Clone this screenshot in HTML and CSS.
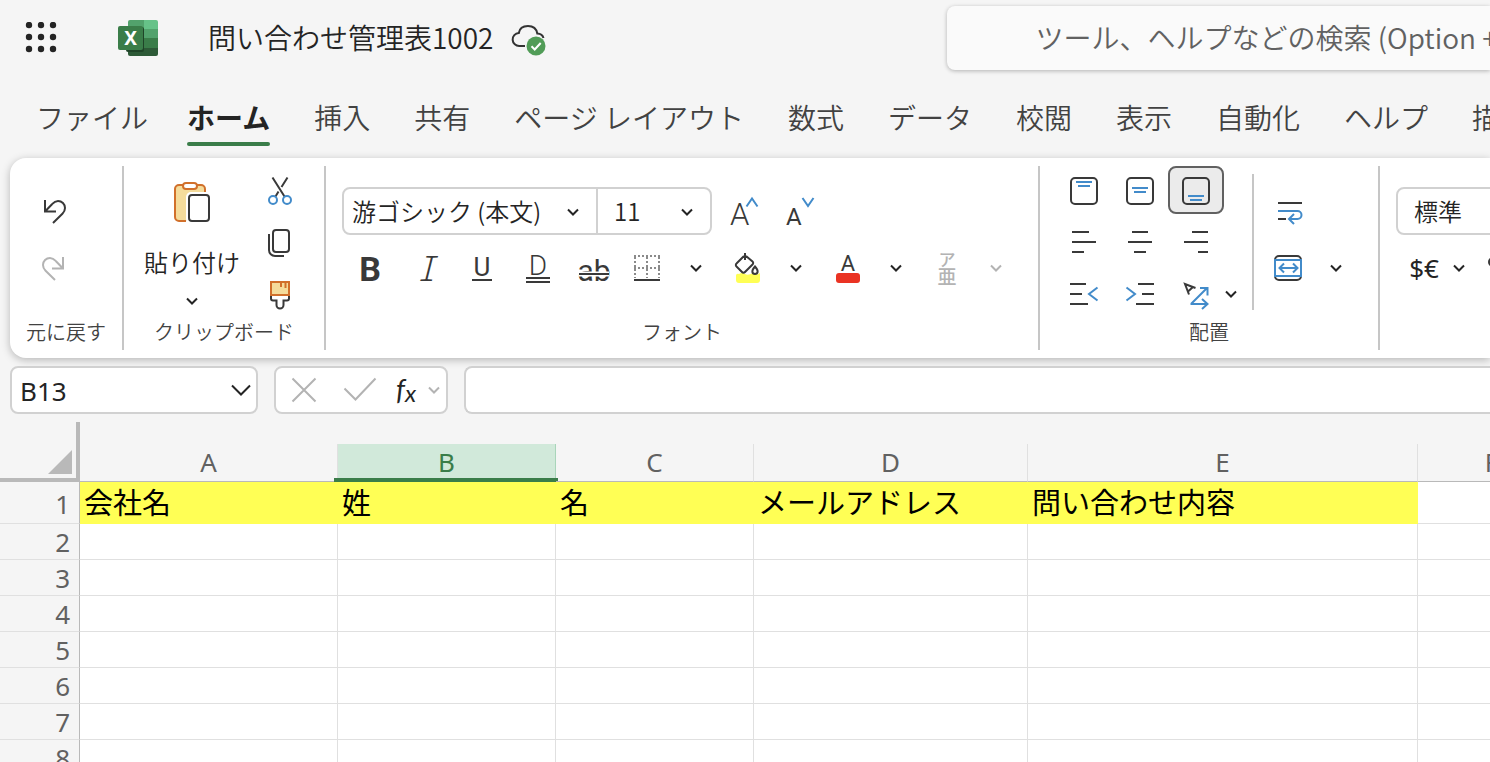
FILE: index.html
```html
<!DOCTYPE html>
<html lang="ja">
  <head>
    <meta charset="UTF-8" />
    <meta name="viewport" content="width=device-width, initial-scale=1.0" />
    <title>問い合わせ管理表1002</title>
    <link rel="stylesheet" href="styles.css">
  </head>
  <body>
    <svg class="defs" aria-hidden="true">
      <symbol id="chevron" viewBox="0 0 14 14">
        <path d="M2 4.500l5 5 5-5" fill="none" stroke="currentColor" stroke-width="2" />
      </symbol>
    </svg>

    <!-- タイトルバー -->
    <header class="titlebar">
      <button class="apps" aria-label="アプリ起動ツール">
        <svg width="32" height="32" viewBox="0 0 32 32" fill="#242424">
          <circle cx="4" cy="3" r="3.2" /><circle cx="16" cy="3" r="3.2" /><circle cx="28" cy="3" r="3.2" />
          <circle cx="4" cy="15" r="3.2" /><circle cx="16" cy="15" r="3.2" /><circle cx="28" cy="15" r="3.2" />
          <circle cx="4" cy="27" r="3.2" /><circle cx="16" cy="27" r="3.2" /><circle cx="28" cy="27" r="3.2" />
        </svg>
      </button>
      <svg class="logo" width="40" height="36" viewBox="0 0 40 36">
        <path d="M12 0h14v9H10V2a2 2 0 0 1 2-2z" fill="#52a26c" />
        <path d="M26 0h12a2 2 0 0 1 2 2v7H26z" fill="#66c288" />
        <path d="M10 9h16v9H10z" fill="#3a7d49" />
        <path d="M26 9h14v9H26z" fill="#52a26c" />
        <path d="M10 18h16v10H10z" fill="#2d5a37" />
        <path d="M26 18h14v10H26z" fill="#3a7d49" />
        <path d="M10 28h30v6a2 2 0 0 1-2 2H12a2 2 0 0 1-2-2z" fill="#2d5a37" />
        <rect x="8" y="7" width="18" height="25" rx="2" fill="#1f4428" />
        <rect x="0" y="6" width="25" height="24" rx="2" fill="#3a7d49" />
        <text class="logo-x" x="12.500" y="25" text-anchor="middle">X</text>
      </svg>
      <h1>問い合わせ管理表1002</h1>
      <svg class="cloud" width="36" height="32" viewBox="0 0 36 32">
        <path d="M14 22H8.500a6.500 6.500 0 0 1-.7-13C8.500 4.500 12 2 17 2s8.500 3 9.300 7.500c3 .2 5.500 2 6.200 4.500" fill="none" stroke="#333" stroke-width="2" />
        <circle cx="25" cy="22" r="9.500" fill="#519c57" />
        <path d="M20.500 22.300l3.200 3.200 6-6.500" fill="none" stroke="#fff" stroke-width="2" />
      </svg>
      <input class="search" type="text" aria-label="検索" placeholder="ツール、ヘルプなどの検索 (Option + Q)" />
    </header>

    <nav class="tabs">
      <a class="file" href="#">ファイル</a>
      <a class="current" href="#">ホーム</a>
      <a href="#">挿入</a>
      <a href="#">共有</a>
      <a href="#">ページ レイアウト</a>
      <a href="#">数式</a>
      <a href="#">データ</a>
      <a href="#">校閲</a>
      <a href="#">表示</a>
      <a href="#">自動化</a>
      <a href="#">ヘルプ</a>
      <a href="#">描画</a>
    </nav>

    <!-- リボン -->
    <div class="ribbon">
      <section class="group undo">
        <div class="tools stack">
          <button class="tool tall" aria-label="元に戻す">
            <svg class="icon" viewBox="0 0 40 40"><path d="M11 8v11.500H22M11.500 19l6.500-6.800C20 10 21.500 9 24 9a7 7 0 0 1 7 7c0 2.500-1 4.200-2.600 5.800L19 31" /></svg>
          </button>
          <button class="tool tall" aria-label="やり直し" disabled>
            <svg class="icon" viewBox="0 0 40 40"><path d="M29 9v11.500H18M28.500 20l-6.500-6.800C20 11 18.500 10 16 10a7 7 0 0 0-7 7c0 2.500 1 4.200 2.600 5.800L21 32" /></svg>
          </button>
        </div>
        <h2>元に戻す</h2>
      </section>

      <section class="group clipboard">
        <div class="tools">
          <button class="paste">
            <svg width="40" height="44" viewBox="0 0 40 44" fill="none" stroke-width="2">
              <rect x="3" y="5" width="30" height="36" rx="4" fill="#f5dc9b" />
              <rect x="14" y="12" width="26" height="32" rx="5" fill="#fff" />
              <path d="M14 41H7a4 4 0 0 1-4-4V9a4 4 0 0 1 4-4h22a4 4 0 0 1 4 4v3" stroke="#d1702b" />
              <rect x="11" y="3" width="14" height="6" rx="3" fill="#fff" stroke="#d1702b" />
              <rect x="17" y="15" width="20" height="26" rx="3" fill="#fff" stroke="#393939" />
            </svg>
            <span>貼り付け</span>
            <svg class="chevron"><use href="#chevron" /></svg>
          </button>
          <div class="stack rows">
            <button class="tool" aria-label="切り取り">
              <svg class="icon" viewBox="0 0 40 40"><path d="M12.500 7.500L24.500 26.500M27.500 7.500l-6 9.500M18.500 21.500L15.500 26.500" /><g class="blue"><circle cx="13" cy="30" r="4" /><circle cx="27" cy="30" r="4" /></g></svg>
            </button>
            <button class="tool" aria-label="コピー">
              <svg class="icon" viewBox="0 0 40 40"><rect x="13" y="8" width="16" height="22" rx="3" /><path d="M9 12v16a6 6 0 0 0 6 6h9" /></svg>
            </button>
            <button class="tool" aria-label="書式のコピー">
              <svg class="icon" viewBox="0 0 40 40"><path d="M11 20v4.500c0 1.500 1 2 2 2h3.500V31a3.500 3.500 0 0 0 7 0v-4.500H27c1.500 0 2-1 2-2V20" /><path d="M11 8h18v13H11zM21 8v5M25.500 8v6" fill="#f5dc9b" stroke="#d1702b" /></svg>
            </button>
          </div>
        </div>
        <h2>クリップボード</h2>
      </section>

      <section class="group font">
        <div class="tools lines">
          <div class="line">
            <div class="combo">
              <label class="pick font-name">
                <select aria-label="フォント"><option>游ゴシック (本文)</option></select>
                <svg class="chevron"><use href="#chevron" /></svg>
              </label>
              <label class="pick font-size">
                <select aria-label="フォント サイズ"><option>11</option></select>
                <svg class="chevron"><use href="#chevron" /></svg>
              </label>
            </div>
            <button class="tool tall" aria-label="フォント サイズの拡大">
              <svg class="icon" viewBox="0 0 40 40"><text x="6" y="34" font-size="31" class="light">A</text><path class="blue" d="M22.500 15.500L28 7.500l5.500 8" /></svg>
            </button>
            <button class="tool tall" aria-label="フォント サイズの縮小">
              <svg class="icon" viewBox="0 0 40 40"><text x="6" y="34" font-size="24">A</text><path class="blue" d="M22.500 7l5.500 8 5.500-8" /></svg>
            </button>
          </div>
          <div class="line">
            <button class="tool tall" aria-label="太字">
              <svg class="icon" viewBox="0 0 40 40"><text x="20" y="33" font-size="34" class="mid heavy">B</text></svg>
            </button>
            <button class="tool tall" aria-label="斜体">
              <svg class="icon" viewBox="0 0 40 40"><text x="20" y="33" font-size="35" class="mid slant">I</text></svg>
            </button>
            <button class="tool tall" aria-label="下線">
              <svg class="icon" viewBox="0 0 40 40"><text x="20" y="28" font-size="26" class="mid">U</text><path d="M10 32h20" /></svg>
            </button>
            <button class="tool tall" aria-label="二重下線">
              <svg class="icon" viewBox="0 0 40 40"><text x="20" y="27" font-size="28" class="mid light">D</text><path d="M8 30h24M8 34h24" /></svg>
            </button>
            <button class="tool tall" aria-label="取り消し線">
              <svg class="icon" viewBox="0 0 40 40"><text x="20" y="33" font-size="30" class="mid">ab</text><path d="M5 26h30" stroke="#fff" stroke-width="5" /><path d="M5 26h30" /></svg>
            </button>
            <div class="split">
              <button class="tool" aria-label="罫線">
                <svg class="icon" viewBox="0 0 40 40"><path d="M5 8h26M5 20h26M6 9v21M18 9v21M30 9v21" stroke="#8a8a8a" stroke-dasharray="2 2" /><path d="M5 32h26" /></svg>
              </button>
              <button class="drop" aria-label="罫線のオプション"><svg class="chevron"><use href="#chevron" /></svg></button>
            </div>
            <div class="split">
              <button class="tool" aria-label="塗りつぶしの色">
                <svg class="icon" viewBox="0 0 40 40"><path d="M10 26q3-2 6 0t8-1q3 3 7 0v7a3 3 0 0 1-3 3H10a3 3 0 0 1-3-3v-4a2 2 0 0 1 3-2z" fill="#ffff55" stroke="none" /><path d="M16 5v7M15 8l-7.500 7.500a2 2 0 0 0 0 3l5.500 5.500a2 2 0 0 0 3 0l7.500-7.500a2 2 0 0 0 0-3L17 8" /><path d="M26 18.500c-4 4.500-3 7.500 0 7.500s4-3 0-7.500z" /></svg>
              </button>
              <button class="drop" aria-label="塗りつぶしの色のオプション"><svg class="chevron"><use href="#chevron" /></svg></button>
            </div>
            <div class="split">
              <button class="tool" aria-label="フォントの色">
                <svg class="icon" viewBox="0 0 40 40"><text x="19" y="22.500" font-size="22" class="mid">A</text><rect x="7" y="25" width="24" height="10" rx="3" fill="#ea3323" stroke="none" /></svg>
              </button>
              <button class="drop" aria-label="フォントの色のオプション"><svg class="chevron"><use href="#chevron" /></svg></button>
            </div>
            <div class="split">
              <button class="tool" aria-label="ふりがな" disabled>
                <svg class="icon" viewBox="0 0 40 40"><text x="18" y="18" font-size="17" class="mid ruby">ア</text><text x="18" y="36" font-size="19" class="mid ruby">亜</text></svg>
              </button>
              <button class="drop" aria-label="ふりがなのオプション" disabled><svg class="chevron"><use href="#chevron" /></svg></button>
            </div>
          </div>
        </div>
        <h2>フォント</h2>
      </section>

      <section class="group align">
        <div class="tools">
          <div class="align-grid">
            <button class="tool" aria-label="上揃え"><svg class="icon" viewBox="0 0 40 40"><rect x="7" y="8" width="26" height="26" rx="4" /><path class="blue" d="M12 12h16M14 16h12" /></svg></button>
            <button class="tool" aria-label="上下中央揃え"><svg class="icon" viewBox="0 0 40 40"><rect x="7" y="8" width="26" height="26" rx="4" /><path class="blue" d="M12 18h16M14 22h12" /></svg></button>
            <button class="tool pressed" aria-label="下揃え" aria-pressed="true"><svg class="icon" viewBox="0 0 40 40"><rect x="7" y="8" width="26" height="26" rx="4" /><path class="blue" d="M12 26h16M14 30h12" /></svg></button>
            <button class="tool" aria-label="左揃え"><svg class="icon" viewBox="0 0 40 40"><path d="M8 10h17M8 20h24M8 30h12" /></svg></button>
            <button class="tool" aria-label="中央揃え"><svg class="icon" viewBox="0 0 40 40"><path d="M12 10h16M8 20h24M14 30h12" /></svg></button>
            <button class="tool" aria-label="右揃え"><svg class="icon" viewBox="0 0 40 40"><path d="M16 10h16M8 20h24M22 30h10" /></svg></button>
            <button class="tool" aria-label="インデントを減らす"><svg class="icon" viewBox="0 0 40 40"><path d="M6 10h16M6 20h12M6 30h18" /><path class="blue" d="M33.500 13.500L25 20l8.500 6.500" /></svg></button>
            <button class="tool" aria-label="インデントを増やす"><svg class="icon" viewBox="0 0 40 40"><path d="M18 10h16M22 20h12M16 30h18" /><path class="blue" d="M6.500 13.500L15 20l-8.500 6.500" /></svg></button>
            <button class="tool" aria-label="方向"><svg class="icon" viewBox="0 0 40 40"><path d="M13 20.500L9 10l10.500 4M12 17.500l5-4.500" /><path class="blue" d="M15 30L31 14M24 14h7.500v7.500M14.500 30H31M26 25l5.500 5-5.500 5" /></svg></button>
            <button class="drop narrow" aria-label="方向のオプション"><svg class="chevron"><use href="#chevron" /></svg></button>
          </div>
          <div class="wrap-tools">
            <button class="tool tall" aria-label="折り返して全体を表示"><svg class="icon" viewBox="0 0 40 40"><path d="M10 11h24M10 27h8" /><path class="blue" d="M10 19h19.500a4 4 0 0 1 0 8H22M26 22l-5 5 5 5" /></svg></button>
            <div class="split">
              <button class="tool" aria-label="セルを結合して中央揃え"><svg class="icon" viewBox="0 0 40 40"><rect x="7" y="8" width="26" height="24" rx="4" /><path class="blue" d="M7 12h26v16H7z" fill="#fff" /><path class="blue" d="M12 20h17M16 15.500L11.500 20l4.500 4.500M25 15.500l4.500 4.500-4.500 4.500" /></svg></button>
              <button class="drop" aria-label="結合のオプション"><svg class="chevron"><use href="#chevron" /></svg></button>
            </div>
          </div>
        </div>
        <h2>配置</h2>
      </section>

      <section class="group number">
        <div class="tools lines">
          <div class="line">
            <div class="combo">
              <label class="pick format">
                <select aria-label="表示形式"><option>標準</option></select>
              </label>
            </div>
          </div>
          <div class="line">
            <button class="tool tall currency" aria-label="通貨表示形式">$€</button>
            <button class="drop narrow" aria-label="通貨のオプション"><svg class="chevron"><use href="#chevron" /></svg></button>
            <button class="tool tall percent" aria-label="パーセント スタイル"><svg class="icon" viewBox="0 0 40 40"><circle cx="13" cy="14" r="4" /><circle cx="27" cy="28" r="4" /><path d="M28 10L12 32" /></svg></button>
          </div>
        </div>
      </section>
    </div>

    <!-- 数式バー -->
    <div class="formula">
      <div class="box name-box">
        <input type="text" aria-label="名前ボックス" value="B13" />
        <button aria-label="名前の一覧"><svg width="20" height="12" viewBox="0 0 20 12"><path d="M1 1.500l9 9 9-9" fill="none" stroke="#242424" stroke-width="2" /></svg></button>
      </div>
      <div class="box fx-box">
        <button aria-label="キャンセル" disabled><svg class="icon" viewBox="0 0 40 40"><path d="M8.500 8.500l23 23M31.500 8.500l-23 23" /></svg></button>
        <button aria-label="入力" disabled><svg class="icon" viewBox="0 0 40 40"><path d="M4.500 18.500l11 11L35.500 8.500" /></svg></button>
        <button class="fx" aria-label="関数の挿入"><i>f</i><i class="sub">x</i></button>
        <button class="fx-drop" aria-label="関数のオプション" disabled><svg class="chevron"><use href="#chevron" /></svg></button>
      </div>
      <input class="box entry" type="text" aria-label="数式バー" />
    </div>

    <div class="sheet">
      <table>
        <colgroup>
          <col class="c-row"><col class="c-a"><col class="c-b"><col class="c-c"><col class="c-d"><col class="c-e"><col class="c-f">
        </colgroup>
        <thead>
          <tr>
            <th class="corner"><svg width="24" height="24" viewBox="0 0 24 24"><path d="M24 0v24H0z" fill="#b9b9b9" /></svg></th>
            <th><div>A</div></th>
            <th class="selected"><div>B</div></th>
            <th><div>C</div></th>
            <th><div>D</div></th>
            <th><div>E</div></th>
            <th><div>F</div></th>
          </tr>
        </thead>
        <tbody>
          <tr class="titles"><th>1</th><td>会社名</td><td>姓</td><td>名</td><td>メールアドレス</td><td>問い合わせ内容</td><td></td></tr>
          <tr><th>2</th><td></td><td></td><td></td><td></td><td></td><td></td></tr>
          <tr><th>3</th><td></td><td></td><td></td><td></td><td></td><td></td></tr>
          <tr><th>4</th><td></td><td></td><td></td><td></td><td></td><td></td></tr>
          <tr><th>5</th><td></td><td></td><td></td><td></td><td></td><td></td></tr>
          <tr><th>6</th><td></td><td></td><td></td><td></td><td></td><td></td></tr>
          <tr><th>7</th><td></td><td></td><td></td><td></td><td></td><td></td></tr>
          <tr><th>8</th><td></td><td></td><td></td><td></td><td></td><td></td></tr>
        </tbody>
      </table>
    </div>
  </body>
</html>
```
FILE: styles.css
```css
* {
  box-sizing: border-box;
}
body {
  margin: 0;
  height: 100vh;
  display: flex;
  flex-direction: column;
  overflow: hidden;
  background-color: #f5f5f5;
  color: #242424;
  font-family: 'Noto Sans CJK JP', sans-serif;
  font-weight: 350;
}
button,
input,
select {
  font: inherit;
  color: inherit;
  margin: 0;
  padding: 0;
  border: 0;
  background: none;
}
button {
  display: flex;
  align-items: center;
  justify-content: center;
  flex-shrink: 0;
}
.defs {
  position: absolute;
  width: 0;
  height: 0;
}
.chevron {
  display: block;
  width: 14px;
  height: 14px;
}

/* タイトルバー */
.titlebar {
  display: flex;
  align-items: center;
  height: 76px;
  padding-left: 25px;
  flex-shrink: 0;
}
.apps {
  width: 32px;
  height: 32px;
}
.logo {
  margin-left: 61px;
  flex-shrink: 0;
}
.logo-x {
  font-family: 'Noto Sans', sans-serif;
  font-size: 19px;
  font-weight: 700;
  fill: #fff;
}
h1 {
  margin: 0 0 2px 50px;
  font-size: 28px;
  font-weight: 350;
  white-space: nowrap;
}
.cloud {
  margin: 3px 0 0 17px;
  flex-shrink: 0;
}
.search {
  flex: 1;
  height: 64px;
  min-width: 0;
  margin-left: 400px;
  padding: 0 0 2px 89px;
  border-radius: 8px 0 0 8px;
  background-color: #fafafa;
  box-shadow: 0 1px 4px rgba(0, 0, 0, 0.28);
  font-size: 28px;
}
.search::placeholder {
  color: #616161;
}

/* タブ */
.tabs {
  display: flex;
  height: 82px;
  padding: 16px 0 12px 36px;
  flex-shrink: 0;
}
.tabs a {
  flex-shrink: 0;
  height: 54px;
  margin-right: 44px;
  line-height: 50px;
  font-size: 28px;
  color: #424242;
  text-decoration: none;
  white-space: nowrap;
}
.tabs .file {
  margin-right: 39px;
}
.tabs .current {
  position: relative;
  color: #242424;
  font-weight: 700;
}
.tabs .current::after {
  content: '';
  position: absolute;
  left: 0;
  right: 0;
  bottom: 0;
  height: 4px;
  border-radius: 2px;
  background-color: #3a7d49;
}

/* リボン */
.ribbon {
  display: flex;
  height: 200px;
  margin-left: 10px;
  padding: 8px 0;
  flex-shrink: 0;
  background-color: #fff;
  border-radius: 16px 0 0 16px;
  box-shadow: 0 2px 8px rgba(0, 0, 0, 0.26);
}
.group {
  display: flex;
  flex-direction: column;
  flex-shrink: 0;
  border-right: 2px solid #c6c6c6;
}
.group h2 {
  margin: 4px 0 0;
  font-size: 20px;
  line-height: 20px;
  font-weight: 350;
  text-align: center;
  color: #424242;
}
.tools {
  display: flex;
  height: 152px;
}
.stack,
.lines {
  display: flex;
  flex-direction: column;
}
.rows {
  gap: 4px;
}
.tool {
  width: 56px;
  height: 48px;
  border-radius: 8px;
}
.tall {
  height: 56px;
}
.icon {
  display: block;
  width: 40px;
  height: 40px;
  overflow: visible;
  fill: none;
  stroke: #393939;
  stroke-width: 2;
}
.icon .blue {
  stroke: #428bca;
}
.icon text {
  font-family: Roboto, 'Noto Sans CJK JP', sans-serif;
  font-weight: 400;
  fill: #393939;
  stroke: none;
}
.icon .mid {
  text-anchor: middle;
}
.icon .light {
  font-weight: 300;
}
.icon .ruby {
  font-weight: 500;
}
.icon .heavy {
  font-weight: 700;
}
.icon .slant {
  font-family: 'Noto Sans Mono', 'Liberation Mono', monospace;
  font-weight: 300;
  font-style: italic;
}
button:disabled {
  color: #b3b3b3;
}
button:disabled .icon {
  stroke: #b3b3b3;
}
button:disabled .icon text {
  fill: #b3b3b3;
}
.pressed {
  background-color: #ebebeb;
  border: 2px solid #616161;
}
.split {
  display: flex;
  align-items: center;
  height: 56px;
}
.font .split .tool {
  width: 54px;
}
.split + .split {
  margin-left: 6px;
}
.drop {
  width: 40px;
  height: 48px;
}
.narrow {
  width: 14px;
}

.undo {
  width: 114px;
}
.undo .tools {
  padding: 18px 0 0 16px;
}
.clipboard {
  width: 202px;
}
.clipboard .tools {
  padding-left: 20px;
  gap: 12px;
}
.paste {
  width: 96px;
  flex-direction: column;
  justify-content: flex-start;
  padding-top: 14px;
  font-size: 24px;
}
.paste span {
  margin: 20px 0 14px;
  line-height: 36px;
}

.font {
  width: 714px;
}
.font .lines,
.number .lines {
  padding: 21px 0 0 16px;
  gap: 5px;
}
.line {
  display: flex;
  align-items: center;
}
.line:first-child {
  height: 48px;
}
.combo {
  display: flex;
  height: 48px;
  margin-right: 4px;
  border: 2px solid #d1d1d1;
  border-radius: 8px;
}
.pick {
  position: relative;
  display: flex;
}
.pick select {
  width: 100%;
  appearance: none;
  padding: 0 0 2px 8px;
  font-size: 24px;
}
.pick .chevron {
  position: absolute;
  top: 16px;
  right: 16px;
  pointer-events: none;
}
.font-name {
  width: 254px;
  border-right: 2px solid #d1d1d1;
}
.font-size {
  width: 112px;
}
.font-size select,
.format select {
  padding-left: 16px;
}

.align {
  width: 340px;
}
.align .tools {
  padding-left: 16px;
}
.align-grid {
  display: grid;
  grid-template-columns: 56px 56px 56px 14px;
  grid-auto-rows: 48px;
  gap: 4px 0;
}
.align-grid .tool:nth-child(3n + 1) {
  grid-column: 1;
}
.wrap-tools {
  height: 136px;
  margin: 8px 0 0 14px;
  padding: 10px 0 0 6px;
  border-left: 2px solid #c6c6c6;
}

.number {
  flex: 1;
  min-width: 0;
  overflow: hidden;
  border-right: 0;
}
.format {
  width: 240px;
}
.currency {
  font-family: 'Noto Sans', sans-serif;
  font-size: 26px;
  font-weight: 400;
}
.percent {
  margin-left: 6px;
}

/* 数式バー */
.formula {
  display: flex;
  gap: 16px;
  height: 56px;
  padding: 8px 0 0 10px;
  flex-shrink: 0;
  position: relative;
}
.box {
  display: flex;
  height: 48px;
  background-color: #fff;
  border: 2px solid #d1d1d1;
  border-radius: 8px;
}
.name-box {
  width: 248px;
}
.name-box input {
  flex: 1;
  min-width: 0;
  padding: 2px 0 0 8px;
  font-family: 'Noto Sans', sans-serif;
  font-size: 26px;
  font-weight: 400;
}
.name-box button {
  width: 30px;
}
.fx-box {
  width: 174px;
}
.fx-box button {
  width: 56px;
}
.fx-box .fx {
  width: 36px;
  padding-bottom: 2px;
  font-family: Lato, sans-serif;
  font-size: 28px;
  font-weight: 400;
  line-height: 32px;
}
.fx .sub {
  margin-top: 8px;
  font-size: 24px;
}
.fx-box .fx-drop {
  width: 20px;
}
.entry {
  flex: 1;
  min-width: 0;
  border-right: 0;
  border-radius: 8px 0 0 8px;
  padding: 0 8px;
  font-size: 26px;
}

/* シート */
.sheet {
  flex: 1;
  min-height: 0;
  margin-top: 8px;
  overflow: hidden;
}
table {
  width: 1566px;
  table-layout: fixed;
  border-collapse: separate;
  border-spacing: 0;
}
.c-row {
  width: 80px;
}
.c-a {
  width: 258px;
}
.c-b {
  width: 218px;
}
.c-c {
  width: 198px;
}
.c-d {
  width: 274px;
}
.c-e {
  width: 390px;
}
.c-f {
  width: 148px;
}
th,
td {
  padding: 0;
  font-weight: 400;
}
th {
  font-family: 'Noto Sans', sans-serif;
}
thead th {
  height: 60px;
  vertical-align: bottom;
  position: relative;
}
thead div {
  height: 38px;
  line-height: 36px;
  border-right: 1px solid #e0e0e0;
  border-bottom: 1px solid #b9b9b9;
  font-size: 26px;
  color: #616161;
}
thead .corner {
  padding: 0 4px 4px 0;
  border-right: 4px solid #b9b9b9;
  border-bottom: 4px solid #b9b9b9;
  text-align: right;
}
.corner svg {
  display: block;
  margin-left: auto;
}
.selected div {
  background-color: #d1e9da;
  border-color: #a9d5ba;
  color: #3a7d49;
}
.selected::after {
  content: '';
  position: absolute;
  left: -4px;
  right: -2px;
  bottom: 0;
  height: 4px;
  background-color: #3a7d49;
}
tbody th {
  height: 36px;
  padding: 2px 9px 0 0;
  border-right: 1px solid #b9b9b9;
  border-bottom: 1px solid #e0e0e0;
  font-size: 26px;
  line-height: 33px;
  text-align: right;
  color: #616161;
}
tbody td {
  background-color: #fff;
  border-right: 1px solid #e0e0e0;
  border-bottom: 1px solid #e0e0e0;
}
.titles th,
.titles td {
  height: 42px;
  line-height: 36px;
}
.titles td {
  padding: 0 0 4px 4px;
  font-size: 29px;
  color: #000;
  white-space: nowrap;
}
.titles td:not(:last-child) {
  background-color: #ffff55;
  border-color: #ffff55;
}
```
